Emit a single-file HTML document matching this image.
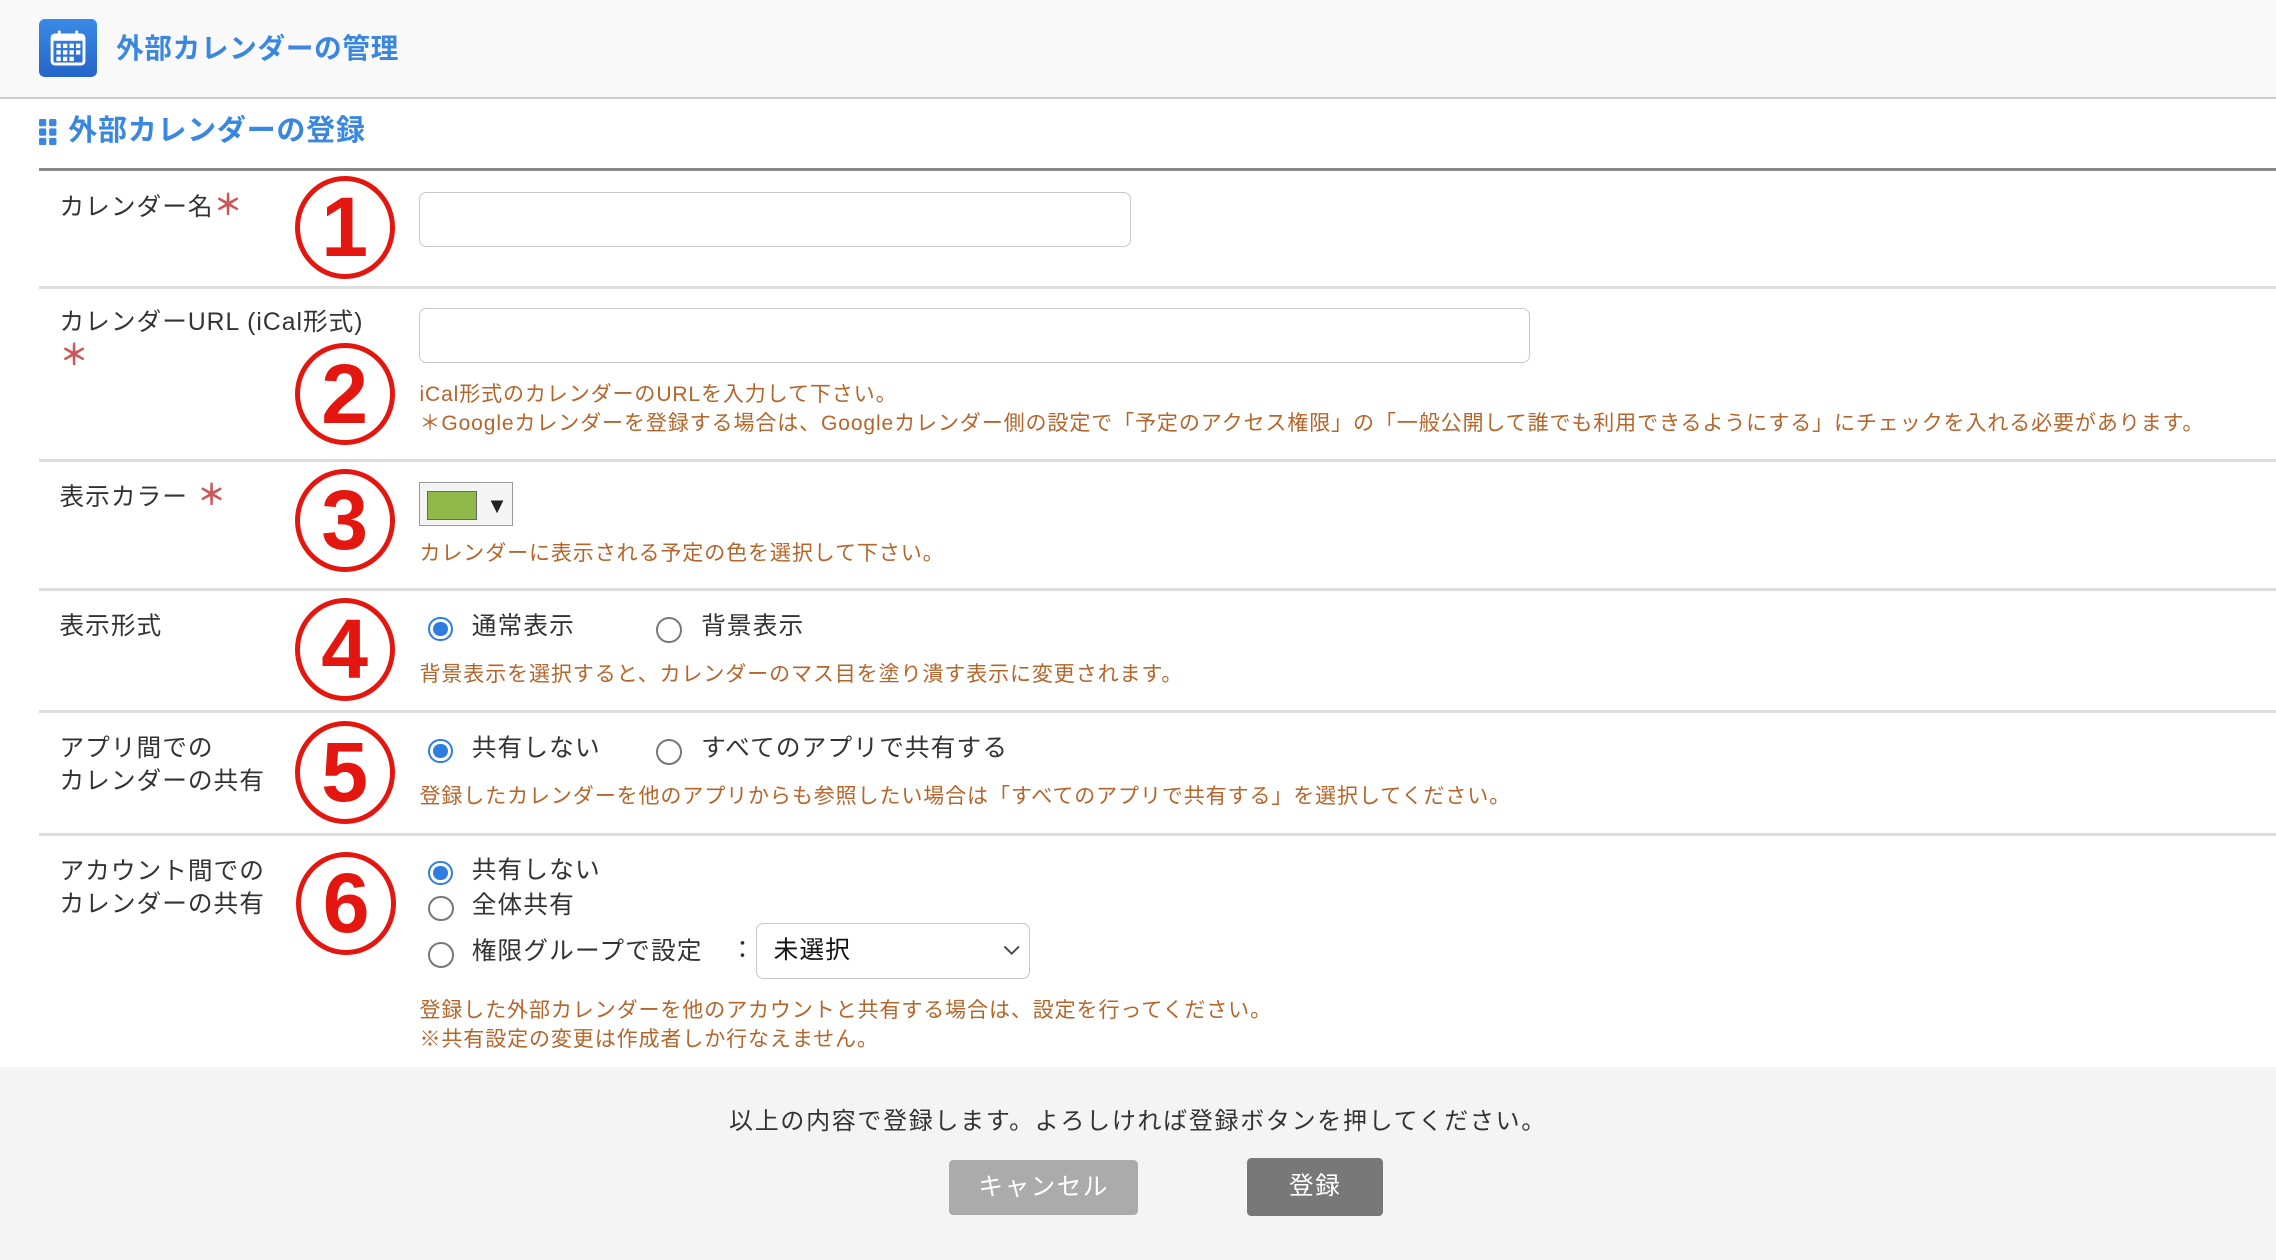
<!DOCTYPE html>
<html><head><meta charset="utf-8"><style>
html{zoom:1.45153}
body{margin:0;width:1568px;height:868px;overflow:hidden;background:#fff;font-family:"Liberation Sans","Noto Sans CJK JP",sans-serif;color:#333;position:relative;letter-spacing:0.6px}
.a{position:absolute}
.hdr{left:0;top:0;width:1568px;height:67px;background:#f9f9f9;border-bottom:2px solid #ccc}
.t{color:#3a87e0;font-weight:bold;white-space:nowrap;letter-spacing:0.5px}
.line{left:27px;right:0;height:2px;background:#ddd}
.lbl{left:41px;font-size:17px;line-height:23px;color:#333;white-space:nowrap;letter-spacing:0.7px}
.star{color:#c9585a;font-weight:bold;font-size:20px}
.circ{width:62px;height:64px;border:4px solid #e3170f;border-radius:50%;color:#e3170f;font-weight:bold;font-size:58px;line-height:64px;text-align:center;font-family:"Liberation Sans",sans-serif;letter-spacing:0}
.inp{border:1px solid #c8c8c8;border-radius:5px;background:#fff}
.hint{left:289px;font-size:14.5px;line-height:20px;color:#b5652a;white-space:nowrap;letter-spacing:0.6px}
.rad{width:15px;height:15px;border:1.5px solid #777;border-radius:50%;background:#fff}
.rad.on{border:2px solid #2f7de1;width:14px;height:14px}
.rad.on::after{content:"";position:absolute;left:2px;top:2px;width:10px;height:10px;border-radius:50%;background:#2f7de1}
.rl{font-size:17px;color:#333;white-space:nowrap;line-height:22px;letter-spacing:0.8px}
</style></head><body>
<div class="a hdr"></div>
<div class="a" style="left:27px;top:13px;width:40px;height:40px;border-radius:4px;background:linear-gradient(#3a8ae6,#2565c8)">
<svg width="40" height="40" viewBox="0 0 40 40"><rect x="9" y="11" width="22" height="20" rx="2" fill="none" stroke="#fff" stroke-width="2"/><rect x="9" y="11" width="22" height="4" fill="#fff"/><path d="M14 8v5M26 8v5" stroke="#fff" stroke-width="2"/><g fill="#fff"><rect x="12" y="17" width="3" height="3"/><rect x="16.5" y="17" width="3" height="3"/><rect x="21" y="17" width="3" height="3"/><rect x="25.5" y="17" width="3" height="3"/><rect x="12" y="21.5" width="3" height="3"/><rect x="16.5" y="21.5" width="3" height="3"/><rect x="21" y="21.5" width="3" height="3"/><rect x="25.5" y="21.5" width="3" height="3"/><rect x="12" y="26" width="3" height="3"/><rect x="16.5" y="26" width="3" height="3"/><rect x="21" y="26" width="3" height="3"/></g></svg></div>
<div class="a t" style="left:80px;top:21px;font-size:19px;line-height:26px">外部カレンダーの管理</div>
<svg class="a" style="left:27px;top:82px" width="13" height="18"><g fill="#3a87e0"><rect x="0" y="0" width="5" height="5" rx="1"/><rect x="7" y="0" width="5" height="5" rx="1"/><rect x="0" y="6.5" width="5" height="5" rx="1"/><rect x="7" y="6.5" width="5" height="5" rx="1"/><rect x="0" y="13" width="5" height="5" rx="1"/><rect x="7" y="13" width="5" height="5" rx="1"/></g></svg>
<div class="a t" style="left:47px;top:77px;font-size:20px;line-height:27px">外部カレンダーの登録</div>
<div class="a line" style="top:116px;background:#888"></div>
<div class="a line" style="top:197px"></div>
<div class="a line" style="top:316px"></div>
<div class="a line" style="top:405px"></div>
<div class="a line" style="top:489px"></div>
<div class="a line" style="top:574px"></div>

<div class="a lbl" style="top:131px">カレンダー名<span class="star">＊</span></div>
<div class="a lbl" style="top:211px">カレンダーURL (iCal形式)<br><span class="star">＊</span></div>
<div class="a lbl" style="top:331px">表示カラー<span class="star"> ＊</span></div>
<div class="a lbl" style="top:420px">表示形式</div>
<div class="a lbl" style="top:504px">アプリ間での<br>カレンダーの共有</div>
<div class="a lbl" style="top:589px">アカウント間での<br>カレンダーの共有</div>

<div class="a circ" style="left:203px;top:121px">1</div>
<div class="a circ" style="left:203px;top:236px">2</div>
<div class="a circ" style="left:203px;top:323px">3</div>
<div class="a circ" style="left:203px;top:412px">4</div>
<div class="a circ" style="left:203px;top:497px">5</div>
<div class="a circ" style="left:204px;top:587px">6</div>

<div class="a inp" style="left:289px;top:132px;width:489px;height:37px"></div>
<div class="a inp" style="left:289px;top:212px;width:764px;height:37px"></div>
<div class="a hint" style="top:262px">iCal形式のカレンダーのURLを入力して下さい。<br>＊Googleカレンダーを登録する場合は、Googleカレンダー側の設定で「予定のアクセス権限」の「一般公開して誰でも利用できるようにする」にチェックを入れる必要があります。</div>

<div class="a" style="left:289px;top:332px;width:63px;height:29px;border:1px solid #999;background:#f4f4f4"></div>
<div class="a" style="left:294px;top:338px;width:33px;height:19px;background:#8fb84a;border:1px solid #666"></div>
<div class="a" style="left:335px;top:338px;font-size:15px;line-height:20px;color:#222">▼</div>
<div class="a hint" style="top:371px">カレンダーに表示される予定の色を選択して下さい。</div>

<div class="a rad on" style="left:295px;top:425px"></div><div class="a rl" style="left:325px;top:421px">通常表示</div>
<div class="a rad" style="left:452px;top:425px"></div><div class="a rl" style="left:483px;top:421px">背景表示</div>
<div class="a hint" style="top:455px">背景表示を選択すると、カレンダーのマス目を塗り潰す表示に変更されます。</div>

<div class="a rad on" style="left:295px;top:509px"></div><div class="a rl" style="left:325px;top:505px">共有しない</div>
<div class="a rad" style="left:452px;top:509px"></div><div class="a rl" style="left:483px;top:505px">すべてのアプリで共有する</div>
<div class="a hint" style="top:539px">登録したカレンダーを他のアプリからも参照したい場合は「すべてのアプリで共有する」を選択してください。</div>

<div class="a rad on" style="left:295px;top:593px"></div><div class="a rl" style="left:325px;top:589px">共有しない</div>
<div class="a rad" style="left:295px;top:617px"></div><div class="a rl" style="left:325px;top:613px">全体共有</div>
<div class="a rad" style="left:295px;top:649px"></div><div class="a rl" style="left:325px;top:645px">権限グループで設定</div>
<div class="a rl" style="left:503px;top:644px">：</div>
<div class="a inp" style="left:521px;top:636px;width:187px;height:37px"></div>
<div class="a rl" style="left:533px;top:644px;color:#111">未選択</div>
<svg class="a" style="left:691px;top:651px" width="12" height="8"><path d="M1 1l5 5 5-5" fill="none" stroke="#444" stroke-width="1.3"/></svg>
<div class="a hint" style="top:686px">登録した外部カレンダーを他のアカウントと共有する場合は、設定を行ってください。<br>※共有設定の変更は作成者しか行なえません。</div>

<div class="a" style="left:0;top:735px;width:1568px;height:133px;background:#f4f4f4"></div>
<div class="a" style="left:0;width:1568px;top:762px;text-align:center;font-size:16.5px;line-height:22px;color:#333;letter-spacing:1.2px">以上の内容で登録します。よろしければ登録ボタンを押してください。</div>
<div class="a" style="left:654px;top:799px;width:130px;height:38px;border-radius:3px;background:#ababab;color:#fff;font-size:17px;line-height:38px;text-align:center;letter-spacing:1px">キャンセル</div>
<div class="a" style="left:859px;top:798px;width:94px;height:40px;border-radius:3px;background:#787878;color:#fff;font-size:17px;line-height:40px;text-align:center;letter-spacing:1px">登録</div>
</body></html>
